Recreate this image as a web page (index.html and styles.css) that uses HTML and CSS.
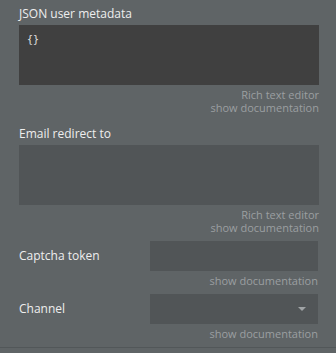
FILE: index.html
```html
<!DOCTYPE html>
<html>
    <head>
        <link rel="stylesheet" href="styles.css">
        <title>Properties</title>
    </head>
    <body>
        <div class="panel">
            <div class="field first">
                <div class="label">JSON user metadata</div>
                <div class="textbox dark">{}</div>
                <div class="links">
                    <span>Rich text editor</span>
                    <span>show documentation</span>
                </div>
            </div>
            <div class="field">
                <div class="label">Email redirect to</div>
                <div class="textbox"></div>
                <div class="links">
                    <span>Rich text editor</span>
                    <span>show documentation</span>
                </div>
            </div>
            <div class="row">
                <div class="label">Captcha token</div>
                <div class="right">
                    <div class="input"></div>
                    <div class="links"><span>show documentation</span></div>
                </div>
            </div>
            <div class="row">
                <div class="label">Channel</div>
                <div class="right">
                    <div class="input dropdown"><span class="caret"></span></div>
                    <div class="links"><span>show documentation</span></div>
                </div>
            </div>
        </div>
    </body>
</html>
```
FILE: styles.css
```css
body {
    margin: 0;
    background-color: rgb(95, 100, 102);
    font-family: "Open Sans", sans-serif;
}
.panel {
    padding: 5px 17px 0 19px;
    height: 342px;
    border-bottom: 1px solid rgb(82, 87, 89);
}
.label {
    color: rgb(238, 238, 238);
    font-size: 12px;
    line-height: 18px;
}
.field {
    margin-bottom: 7px;
}
.field.first {
    margin-bottom: 11px;
}
.field .label {
    margin-bottom: 2px;
}
.textbox {
    height: 60px;
    background-color: rgb(81, 85, 87);
    box-sizing: border-box;
    padding: 9px 8px;
    color: rgb(225, 225, 225);
    font-family: "DejaVu Sans Mono", monospace;
    font-size: 10px;
}
.dark {
    background-color: rgb(64, 64, 64);
}
.links {
    display: flex;
    flex-direction: column;
    align-items: flex-end;
    color: rgb(155, 159, 161);
    font-size: 11px;
    line-height: 13px;
    margin-top: 3px;
}
.row {
    display: flex;
    align-items: flex-start;
    margin-bottom: 7px;
}
.row .label {
    flex: 1;
    line-height: 30px;
}
.right {
    width: 168px;
    margin-right: 1px;
}
.input {
    height: 30px;
    background-color: rgb(81, 85, 87);
    position: relative;
}
.caret {
    position: absolute;
    right: 12px;
    top: 13px;
    border-left: 4px solid transparent;
    border-right: 4px solid transparent;
    border-top: 4px solid rgb(160, 164, 166);
}
```
